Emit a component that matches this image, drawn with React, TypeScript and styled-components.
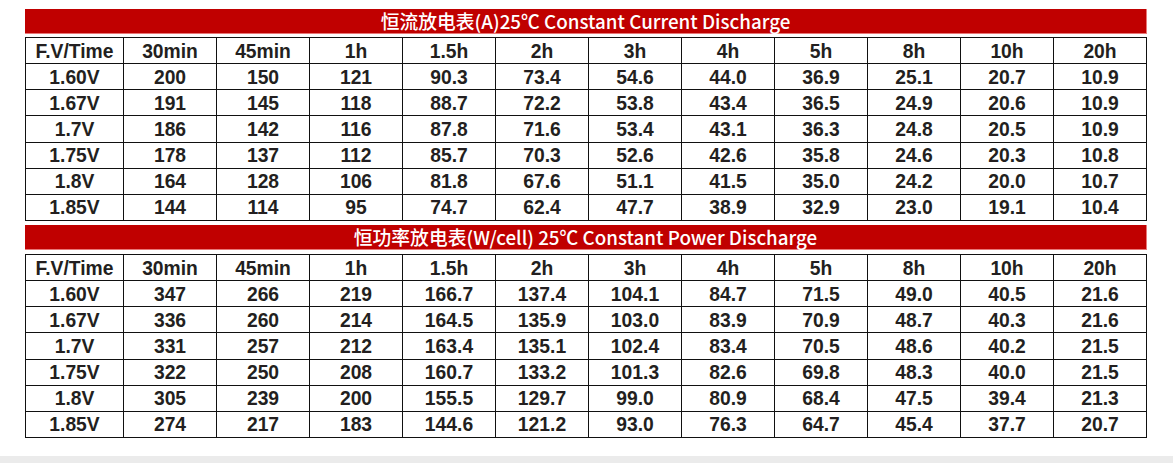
import React from "react";
import styled, { createGlobalStyle } from "styled-components";

const Global = createGlobalStyle`
  html, body { margin: 0; padding: 0; background: #fff; }
  body { font-family: "Liberation Sans", Arial, sans-serif; }
`;

const Page = styled.div`
  width: 1173px;
  height: 463px;
  display: flex;
  flex-direction: column;
  overflow: hidden;
`;

const Content = styled.div`
  padding: 9px 0 0 25px;
  width: 1122px;
  display: flex;
  flex-direction: column;
`;

const Banner = styled.div<{ $gap: number }>`
  height: 25px;
  box-sizing: border-box;
  background: #c00000;
  border-right: 1px solid #e87878;
  border-bottom: 1px solid #e87878;
  color: #fff;
  display: flex;
  align-items: center;
  justify-content: center;
  font-family: "Noto Sans CJK SC", "Noto Sans", sans-serif;
  font-weight: 500;
  font-size: 18.8px;
  margin-bottom: ${(p) => p.$gap}px;
  padding-bottom: 1px;
  white-space: nowrap;
`;

const Grid = styled.div`
  display: grid;
  grid-template-columns: 98px repeat(11, 1fr);
  grid-template-rows: repeat(7, 1fr);
  height: 184px;
  box-sizing: border-box;
  border-top: 1px solid #111;
  border-left: 1px solid #111;
`;

const Cell = styled.div<{ $head?: boolean }>`
  border-right: 1px solid #111;
  border-bottom: 1px solid #111;
  display: flex;
  align-items: center;
  justify-content: center;
  font-family: "Liberation Sans", Arial, sans-serif;
  font-weight: 700;
  font-size: 19.3px;
  color: #231f20;
  padding-top: ${(p) => (p.$head ? 3 : 2)}px;
  box-sizing: border-box;
`;

const Spacer = styled.div`
  height: 4px;
`;

const Footer = styled.div`
  margin-top: auto;
  height: 7px;
  background: #ebebeb;
`;

const headers = ["F.V/Time", "30min", "45min", "1h", "1.5h", "2h", "3h", "4h", "5h", "8h", "10h", "20h"];

const current: string[][] = [
  ["1.60V", "200", "150", "121", "90.3", "73.4", "54.6", "44.0", "36.9", "25.1", "20.7", "10.9"],
  ["1.67V", "191", "145", "118", "88.7", "72.2", "53.8", "43.4", "36.5", "24.9", "20.6", "10.9"],
  ["1.7V", "186", "142", "116", "87.8", "71.6", "53.4", "43.1", "36.3", "24.8", "20.5", "10.9"],
  ["1.75V", "178", "137", "112", "85.7", "70.3", "52.6", "42.6", "35.8", "24.6", "20.3", "10.8"],
  ["1.8V", "164", "128", "106", "81.8", "67.6", "51.1", "41.5", "35.0", "24.2", "20.0", "10.7"],
  ["1.85V", "144", "114", "95", "74.7", "62.4", "47.7", "38.9", "32.9", "23.0", "19.1", "10.4"],
];

const power: string[][] = [
  ["1.60V", "347", "266", "219", "166.7", "137.4", "104.1", "84.7", "71.5", "49.0", "40.5", "21.6"],
  ["1.67V", "336", "260", "214", "164.5", "135.9", "103.0", "83.9", "70.9", "48.7", "40.3", "21.6"],
  ["1.7V", "331", "257", "212", "163.4", "135.1", "102.4", "83.4", "70.5", "48.6", "40.2", "21.5"],
  ["1.75V", "322", "250", "208", "160.7", "133.2", "101.3", "82.6", "69.8", "48.3", "40.0", "21.5"],
  ["1.8V", "305", "239", "200", "155.5", "129.7", "99.0", "80.9", "68.4", "47.5", "39.4", "21.3"],
  ["1.85V", "274", "217", "183", "144.6", "121.2", "93.0", "76.3", "64.7", "45.4", "37.7", "20.7"],
];

function DataTable({ rows }: { rows: string[][] }) {
  return (
    <Grid>
      {headers.map((h) => (
        <Cell key={h} $head>
          {h}
        </Cell>
      ))}
      {rows.map((r, i) => r.map((v, j) => <Cell key={`${i}-${j}`}>{v}</Cell>))}
    </Grid>
  );
}

export default function App() {
  return (
    <Page>
      <Global />
      <Content>
        <Banner $gap={3}>恒流放电表(A)25℃ Constant Current Discharge</Banner>
        <DataTable rows={current} />
        <Spacer />
        <Banner $gap={4}>恒功率放电表(W/cell) 25℃ Constant Power Discharge</Banner>
        <DataTable rows={power} />
      </Content>
      <Footer />
    </Page>
  );
}
